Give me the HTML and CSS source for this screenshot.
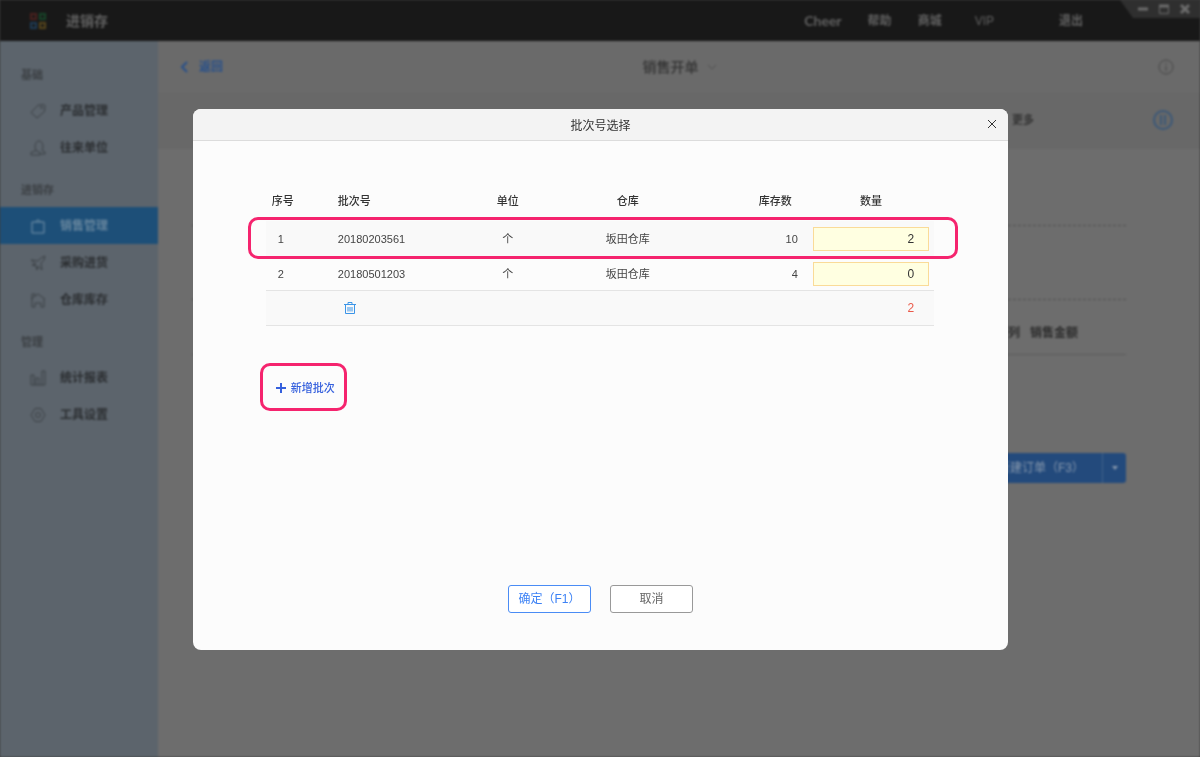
FILE: index.html
```html
<!DOCTYPE html>
<html lang="zh-CN">
<head>
<meta charset="utf-8">
<title>批次号选择</title>
<link rel="stylesheet" href="styles.css">
</head>
<body>
<div class="app">
  <header class="header">
    <svg class="logo" viewBox="0 0 16 16" fill="none" stroke-width="2"><rect x="1" y="1" width="5" height="5" stroke="#4a211e"/><rect x="10" y="1" width="5" height="5" stroke="#174428"/><rect x="1" y="10" width="5" height="5" stroke="#1f3b54"/><rect x="10" y="10" width="5" height="5" stroke="#56451b"/></svg>
    <span class="brand">进销存</span>
    <nav class="links">
      <a href="#" class="latin">Cheer</a><a href="#">帮助</a><a href="#">商城</a><a href="#" class="vip">VIP</a><a href="#" class="logout">退出</a>
    </nav>
    <div class="window-controls">
      <button type="button" aria-label="最小化"><svg viewBox="0 0 12 12"><path d="M1 6h10" stroke-width="3"/></svg></button>
      <button type="button" aria-label="最大化"><svg viewBox="0 0 12 12"><path d="M1 3h10" stroke-width="3"/><path d="M1.500 3v7.500h9V3"/></svg></button>
      <button type="button" aria-label="关闭窗口"><svg viewBox="0 0 12 12"><path d="M2 2l8 8M10 2l-8 8" stroke-width="3"/></svg></button>
    </div>
  </header>
  <div class="workspace">
    <aside class="sidebar">
      <section class="group">
        <h2>基础</h2>
        <a href="#"><svg viewBox="0 0 16 16"><path d="M1 9.500L8 2.200l6-.7 1 1-.5 6L7 15z"/><circle cx="11.500" cy="4.500" r="1"/></svg>产品管理</a>
        <a href="#"><svg viewBox="0 0 16 16"><path d="M6 10.500C4.500 8 4.500 1 9 1s4.500 7 3 9.500l3 1.500v2h-5M6 10.500l-5 2V15h9v-2.500z"/></svg>往来单位</a>
      </section>
      <section class="group">
        <h2>进销存</h2>
        <a href="#" class="active"><svg viewBox="0 0 16 16"><path d="M2 4h12v11H2zM5.500 4l2.500-2.500L10.500 4"/></svg>销售管理</a>
        <a href="#"><svg viewBox="0 0 16 16"><path d="M15 1l-4 2-3 3-7-1 5 4-4 1 4 1 1 4 1-4 4 4-1-7 3-3z"/></svg>采购进货</a>
        <a href="#"><svg viewBox="0 0 16 16"><path d="M1 7l7-5 7 5M2 2v13h3v-4h6v4h3V7M2 2h3v2"/></svg>仓库库存</a>
      </section>
      <section class="group">
        <h2>管理</h2>
        <a href="#"><svg viewBox="0 0 16 16"><path d="M1 15V5h3v10M6 15V8h3v7M12 15V1h3v14H1"/></svg>统计报表</a>
        <a href="#"><svg viewBox="0 0 16 16"><path d="M5 1.500h6l4 6.500-4 6.500H5L1 8z"/><circle cx="8" cy="8" r="2.500"/></svg>工具设置</a>
      </section>
    </aside>
    <main class="main">
      <div class="topbar">
        <a href="#" class="back"><svg viewBox="0 0 8 12"><path d="M7 1L2 6l5 5"/></svg>返回</a>
        <h1>销售开单<svg viewBox="0 0 8 6"><path d="M0 1l4 4 4-4"/></svg></h1>
        <svg class="info" viewBox="0 0 16 16"><circle cx="8" cy="8" r="7"/><path d="M8 7v5M8 4v1.500"/></svg>
      </div>
      <div class="toolbar">
        <span>更多</span>
        <svg class="pause" viewBox="0 0 20 20"><circle cx="10" cy="10" r="9"/><path d="M8 5v10M12 5v10"/></svg>
      </div>
      <div class="order">
        <div class="field-row"></div>
        <div class="field-row"></div>
        <div class="list-head"><span>列</span><span>销售金额</span></div>
        <div class="submit">
          <button type="button" class="create">新建订单（F3）</button><button type="button" class="split" aria-label="更多操作"><svg viewBox="0 0 8 8"><path d="M1 2h6L4 6z"/></svg></button>
        </div>
      </div>
    </main>
  </div>
</div>

<div class="overlay">
  <div class="dialog" role="dialog" aria-labelledby="dialog-title">
    <div class="dialog-head">
      <h2 id="dialog-title">批次号选择</h2>
      <button type="button" class="close" aria-label="关闭"><svg viewBox="0 0 10 10"><path d="M1 1l8 8M9 1l-8 8"/></svg></button>
    </div>
    <div class="dialog-body">
      <table class="batches">
        <colgroup><col class="c-index"><col class="c-batch"><col class="c-unit"><col class="c-store"><col class="c-stock"><col></colgroup>
        <thead>
          <tr><th class="index">序号</th><th class="batch">批次号</th><th>单位</th><th>仓库</th><th class="stock">库存数</th><th class="qty">数量</th></tr>
        </thead>
        <tbody>
          <tr class="marked"><td class="index">1</td><td class="batch">20180203561</td><td>个</td><td>坂田仓库</td><td class="stock">10</td><td class="qty"><input type="text" value="2" aria-label="20180203561 数量"></td></tr>
          <tr class="plain"><td class="index">2</td><td class="batch">20180501203</td><td>个</td><td>坂田仓库</td><td class="stock">4</td><td class="qty"><input type="text" value="0" aria-label="20180501203 数量"></td></tr>
        </tbody>
        <tfoot>
          <tr><td></td><td class="remove"><button type="button" aria-label="删除"><svg viewBox="0 0 12 12"><path d="M0 2.500h12M4 2.500v-2h4v2M1.500 2.500v9h9v-9M4 5v4.500M6 5v4.500M8 5v4.500"/></svg></button></td><td></td><td></td><td></td><td class="total">2</td></tr>
        </tfoot>
      </table>
      <button type="button" class="add"><svg viewBox="0 0 10 10"><path d="M5 0v10M0 5h10"/></svg>新增批次</button>
    </div>
    <div class="actions">
      <button type="button" class="confirm">确定（F1）</button>
      <button type="button" class="cancel">取消</button>
    </div>
  </div>
</div>
</body>
</html>
```

FILE: styles.css
```css
* { box-sizing: border-box; }

body {
  margin: 0;
  background: #3c3c3c;
  color: #333;
  font: 12px/18px "Liberation Sans", "Noto Sans CJK SC", sans-serif;
}

h1, h2 { margin: 0; font-size: inherit; }
a { color: inherit; text-decoration: none; }
button { margin: 0; padding: 0; border: 0; background: none; color: inherit; font: inherit; }
svg { display: block; flex: none; fill: none; stroke: currentColor; }

/* Dimmed application behind the dialog */
.app {
  display: flex;
  flex-direction: column;
  min-height: 100vh;
  background: #6d6d6d;
  filter: blur(1px);
}

.header {
  position: relative;
  display: flex;
  align-items: center;
  height: 41px;
  padding: 0 117px 0 30px;
  background: #181818;
  color: #626262;
}
.logo { width: 16px; height: 16px; }
.brand { margin-left: 20px; font-size: 14px; font-weight: bold; }
.links { display: flex; gap: 26px; margin-left: auto; font-weight: bold; }
.links .latin { font-family: Lato, sans-serif; font-size: 14px; }
.links .vip { margin-left: 7px; font-weight: normal; }
.links .logout { margin-left: 39px; }
.window-controls {
  position: absolute;
  top: 0;
  right: 0;
  display: flex;
  gap: 9px;
  padding: 3px 9px 3px 17px;
  background: #2f2f2f;
  color: #6c6c6c;
  clip-path: polygon(0 0, 100% 0, 100% 100%, 13px 100%);
}
.window-controls svg { width: 12px; height: 12px; }

.workspace { display: flex; flex: 1; }

.sidebar { flex: none; width: 158px; padding-top: 17px; background: #5c646c; }
.group { margin-bottom: 7px; }
.group h2 { padding: 0 0 0 21px; color: #3b3f43; font-size: 11px; line-height: 34px; }
.group a {
  display: flex;
  align-items: center;
  gap: 14px;
  height: 37px;
  padding-left: 30px;
  color: #2b2e31;
  font-weight: bold;
}
.group svg { width: 16px; height: 16px; color: #3b4045; }
.group .active { background: #1d4f78; color: #67869e; }
.group .active svg { color: #7895aa; }

.main { flex: 1; display: flex; flex-direction: column; }
.topbar {
  display: grid;
  grid-template-columns: 1fr auto 1fr;
  align-items: center;
  height: 52px;
  padding: 0 26px;
  background: #6a6a6a;
}
.back { display: flex; align-items: center; gap: 11px; margin-left: -4px; color: #28508a; font-weight: bold; }
.back svg { width: 8px; height: 12px; stroke-width: 2; }
.topbar h1 { display: flex; align-items: center; gap: 9px; font-size: 14px; font-weight: 500; }
.topbar h1 svg { width: 8px; height: 6px; color: #505050; }
.info { justify-self: end; width: 16px; height: 16px; color: #474747; }
.toolbar {
  display: flex;
  align-items: center;
  justify-content: flex-end;
  gap: 119px;
  height: 56px;
  padding: 0 27px 3px 0;
  border-top: 1px solid #676767;
  background: #686868;
  font-size: 11px;
  font-weight: bold;
}
.pause { width: 20px; height: 20px; color: #3b5878; stroke-width: 2; }

.order { padding: 3px 74px 0 34px; }
.field-row { height: 74px; border-bottom: 1px dashed #505050; }
.list-head {
  display: flex;
  justify-content: flex-end;
  gap: 10px;
  padding: 24px 48px 12px 0;
  border-bottom: 1px solid #5b5b5b;
  color: #2b2b2b;
  font-weight: bold;
}
.submit { display: flex; justify-content: flex-end; margin-top: 98px; color: #8798ad; }
.create { height: 30px; padding: 0 18px; border-radius: 3px 0 0 3px; background: #234a7c; }
.split {
  display: grid;
  place-items: center;
  width: 24px;
  border-left: 1px solid #41618a;
  border-radius: 0 3px 3px 0;
  background: #234a7c;
}
.split svg { width: 8px; height: 8px; fill: currentColor; stroke: none; }

/* Dialog */
.overlay { position: fixed; inset: 0; display: grid; place-items: center; padding: 2px 0 0 1px; }
.dialog {
  width: 68%;
  overflow: hidden;
  border-radius: 8px;
  background: #fcfcfc;
}
.dialog-head {
  display: grid;
  grid-template-columns: 1fr auto 1fr;
  align-items: center;
  height: 32px;
  padding: 0 11px;
  border-bottom: 1px solid #dcdcdc;
  background: #f3f3f3;
}
.dialog-head h2 { grid-column: 2; padding-top: 3px; font-weight: normal; }
.close { justify-self: end; color: #333; }
.close svg { width: 10px; height: 10px; }

.dialog-body { padding: 40px 74px 0 67px; font-size: 11px; }
.batches {
  width: calc(100% - 6px);
  margin-left: 6px;
  border-collapse: collapse;
  table-layout: fixed;
  color: #444;
}
.c-index { width: 64px; }
.c-batch { width: 118px; }
.c-unit, .c-store { width: 120px; }
.c-stock { width: 116px; }
.batches th, .batches td { height: 36px; padding: 0; text-align: center; font-weight: normal; }
.batches th { height: 40px; color: #333; font-weight: 500; }
.batches .plain td { height: 34px; border-bottom: 1px solid #e4e4e4; }
.batches tfoot td { height: 35px; border-bottom: 1px solid #e4e4e4; }
.batches .marked { position: relative; background: #f9f9f9; }
.marked .index::after {
  content: "";
  position: absolute;
  inset: -4px -24px -2px -18px;
  border: 3px solid #f5246e;
  border-radius: 10px;
  pointer-events: none;
}
.batches tfoot { background: #f9f9f9; }
.batches th.index { padding-left: 6px; text-align: left; }
.batches td.index { padding-left: 12px; text-align: left; }
.batches .batch { padding-left: 8px; text-align: left; }
.batches th.stock { padding-right: 12px; text-align: right; }
.batches td.stock { padding-right: 6px; text-align: right; }
.batches .qty { padding: 0 5px 0 9px; }
.batches input {
  display: block;
  width: 100%;
  height: 24px;
  padding: 0 14px;
  border: 1px solid #fadb98;
  border-radius: 0;
  background: #ffffe1;
  color: #333;
  font: inherit;
  font-size: 12px;
  text-align: right;
}
.batches .remove { padding-left: 14px; text-align: left; }
.remove button { display: block; color: #3b95e8; }
.remove svg { width: 12px; height: 12px; }
.batches .total { padding-right: 20px; color: #ea5a4a; font-size: 12px; text-align: right; }

.add {
  display: flex;
  align-items: center;
  gap: 5px;
  height: 48px;
  margin-top: 37px;
  padding: 2px 9px 0 13px;
  border: 3px solid #f5246e;
  border-radius: 10px;
  color: #3560dd;
  font-weight: 500;
}
.add svg { width: 10px; height: 10px; stroke-width: 2; }

.actions { display: flex; justify-content: center; gap: 19px; padding: 174px 0 37px; }
.actions button { width: 83px; height: 28px; border: 1px solid; border-radius: 3px; background: #fff; }
.actions .confirm { border-color: #4a8cf5; color: #3d82f5; }
.actions .cancel { border-color: #999; color: #666; }
```
